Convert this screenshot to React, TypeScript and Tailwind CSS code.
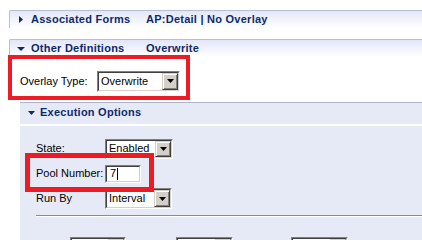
import React from 'react';

const HEAD = "font-['Liberation_Sans',sans-serif] font-bold text-[11px] tracking-[0.25px] text-[#0c2a6b]";

function RightTri() {
    return (
        <svg width="4" height="7" viewBox="0 0 4 7" className="shrink-0">
            <path d="M0 0 L4 3.5 L0 7 Z" fill="#0c2a6b" />
        </svg>
    );
}

function DownTri({ w = 8, color = '#0c2a6b' }: { w?: number; color?: string }) {
    const h = Math.ceil(w / 2);
    return (
        <svg width={w} height={h} viewBox={`0 0 ${w} ${h}`} className="shrink-0">
            <path d={`M0 0 L${w} 0 L${w / 2} ${h} Z`} fill={color} />
        </svg>
    );
}

function DropButton() {
    return (
        <div className="w-[16px] h-full bg-[#d4d0c8] border border-t-[#d4d0c8] border-l-[#d4d0c8] border-r-[#404040] border-b-[#404040] shadow-[inset_1px_1px_#ffffff,inset_-1px_-1px_#808080] flex items-center justify-center">
            <DownTri w={7} color="#000" />
        </div>
    );
}

function Select({ value, className }: { value: string; className: string }) {
    return (
        <div className={`${className} border border-t-[#808080] border-l-[#808080] border-r-white border-b-white`}>
            <div className="h-full border border-t-[#404040] border-l-[#404040] border-r-[#d4d0c8] border-b-[#d4d0c8] bg-white flex">
                <span className="flex-1 pl-[2px] leading-none flex items-center text-black overflow-hidden whitespace-nowrap">{value}</span>
                <DropButton />
            </div>
        </div>
    );
}

export default function App() {
    return (
        <div className="relative w-[422px] h-[240px] overflow-hidden bg-white font-['Liberation_Sans',sans-serif] text-[11px] text-black">
            <div className="pt-[10px] pl-[9px]">
                {/* Associated Forms */}
                <div className="h-[18px] flex items-center border-t border-l border-[#b9bdd2] rounded-tl-[2px] bg-linear-to-b from-[#e3e6f7] to-white">
                    <div className="w-[21px] flex justify-end pr-[2px]">
                        <div className="mr-[6px]"><RightTri /></div>
                    </div>
                    <span className={`${HEAD} w-[115px]`}>Associated Forms</span>
                    <span className={HEAD}>AP:Detail | No Overlay</span>
                </div>

                <div className="h-[11px]" />

                {/* Other Definitions */}
                <div className="h-[18px] flex items-center border-t border-l border-[#b9bdd2] rounded-tl-[2px] bg-linear-to-b from-[#e3e6f7] to-white">
                    <div className="w-[21px] pl-[7px]">
                        <DownTri w={8} />
                    </div>
                    <span className={`${HEAD} w-[115px]`}>Other Definitions</span>
                    <span className={HEAD}>Overwrite</span>
                </div>

                {/* Overlay type */}
                <div className="h-[45px] pt-[3px] pl-[11px] flex items-center">
                    <span className="w-[77px]">Overlay Type:</span>
                    <Select value="Overwrite" className="w-[83px] h-[21px]" />
                </div>

                {/* Execution Options */}
                <div className="ml-[11px] border-t border-[#b0b4c8]">
                    <div className="h-[21px] pb-[2px] flex items-center bg-[#e6eaf7]">
                        <div className="w-[20px] pl-[8px]">
                            <DownTri w={7} />
                        </div>
                        <span className={HEAD}>Execution Options</span>
                    </div>
                    <div className="h-[2px] bg-white" />
                    <div className="bg-[#e6eaf7] pl-[16px] pt-[10px] pb-[20px]">
                        <div className="h-[25px] flex items-center">
                            <span className="w-[69px]">State:</span>
                            <Select value="Enabled" className="w-[68px] h-[20px]" />
                        </div>
                        <div className="h-[25px] flex items-center">
                            <span className="w-[69px]">Pool Number:</span>
                            <div className="w-[36px] h-[18px] border border-t-[#808080] border-l-[#808080] border-r-white border-b-white">
                                <div className="h-full border border-t-[#404040] border-l-[#404040] border-r-[#d4d0c8] border-b-[#d4d0c8] bg-white flex items-center pl-[3px]">
                                    <span className="leading-none">7</span>
                                    <span className="w-px h-[12px] bg-black ml-px" />
                                </div>
                            </div>
                        </div>
                        <div className="h-[25px] flex items-center">
                            <span className="w-[69px]">Run By</span>
                            <Select value="Interval" className="w-[67px] h-[21px]" />
                        </div>
                        <div className="mt-[4px] border-t border-[#8c8c8c] border-b border-b-white" />
                        <div className="mt-[20px] flex">
                            <Select value="" className="ml-[34px] w-[56px] h-[21px]" />
                            <Select value="" className="ml-[50px] w-[57px] h-[21px]" />
                            <Select value="" className="ml-[58px] w-[57px] h-[21px]" />
                        </div>
                    </div>
                </div>
            </div>

            {/* annotation boxes */}
            <div className="absolute left-[8px] top-[55px] w-[182px] h-[45px] border-4 border-[#ed1c24]" />
            <div className="absolute left-[25px] top-[153px] w-[129px] h-[39px] border-[5px] border-[#ed1c24]" />
        </div>
    );
}
